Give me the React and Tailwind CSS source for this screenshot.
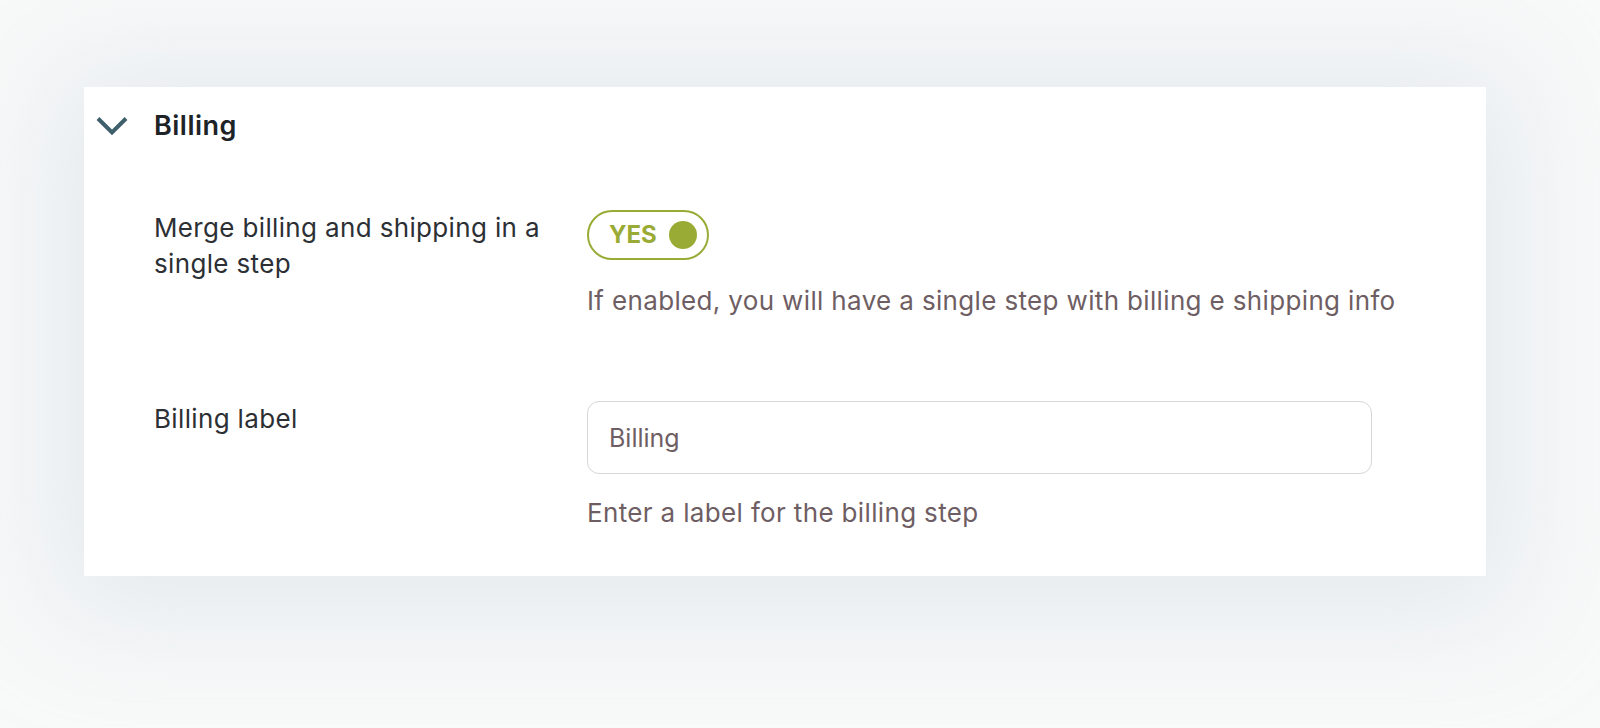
import React from "react";

export default function App() {
  return (
    <div
      className="w-[1600px] h-[728px] bg-[#f8f9f9] pl-[84px] pt-[87px] overflow-hidden"
      style={{ fontFamily: "Inter, 'Noto Sans', sans-serif" }}
    >
      <div className="w-[1402px] h-[489px] bg-white pt-[21px] shadow-[0_10px_110px_30px_rgba(196,210,220,0.38)]">
        <div className="flex items-center h-[36px] pl-[12px]">
          <svg width="32" height="20" viewBox="0 0 32 20" className="shrink-0">
            <polyline
              points="2,2.5 16,16.5 30,2.5"
              fill="none"
              stroke="#3f5f6a"
              strokeWidth="4"
            />
          </svg>
          <h2 className="ml-[26px] text-[27px] leading-[36px] tracking-[0.5px] font-semibold text-[#1d2327]">
            Billing
          </h2>
        </div>

        <div className="mt-[66px] pl-[70px] flex flex-col">
          <div className="grid grid-cols-[433px_1fr]">
            <div className="pr-[30px] text-[26px] leading-[36px] tracking-[0.35px] text-[#2c3035]">
              Merge billing and shipping in a single step
            </div>
            <div className="flex flex-col items-start">
              <button className="w-[122px] h-[50px] border-2 border-[#9aab35] rounded-full flex items-center pl-[20px] pr-[10px]">
                <span className="text-[24px] leading-none font-bold text-[#9aab35]">YES</span>
                <span className="ml-auto w-[28px] h-[28px] rounded-full bg-[#9aab35]"></span>
              </button>
              <p className="mt-[23px] text-[26px] leading-[36px] tracking-[0.35px] text-[#6e5e63]">
                If enabled, you will have a single step with billing e shipping info
              </p>
            </div>
          </div>

          <div className="grid grid-cols-[433px_1fr] mt-[82px]">
            <div className="pr-[30px] text-[26px] leading-[36px] tracking-[0.35px] text-[#2c3035]">
              Billing label
            </div>
            <div className="flex flex-col items-start">
              <input
                type="text"
                defaultValue="Billing"
                className="w-[785px] h-[73px] border-[1.5px] border-[#d6d6d6] rounded-[12px] pl-[21px] text-[25px] text-[#6e5e63] outline-none"
                style={{ fontFamily: "Inter, 'Noto Sans', sans-serif" }}
              />
              <p className="mt-[21px] text-[26px] leading-[36px] tracking-[0.35px] text-[#6e5e63]">
                Enter a label for the billing step
              </p>
            </div>
          </div>
        </div>
      </div>
    </div>
  );
}
